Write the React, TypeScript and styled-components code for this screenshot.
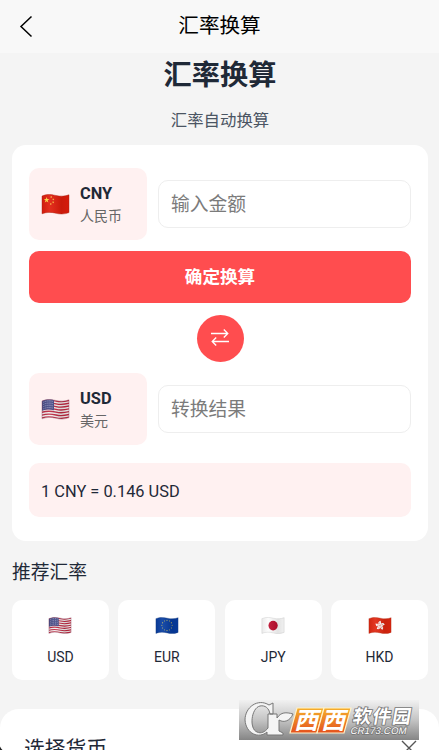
import React from "react";
import styled, { createGlobalStyle } from "styled-components";

const Global = createGlobalStyle`
  * { box-sizing: border-box; }
  html, body { margin: 0; height: 750px; overflow: hidden; }
  body { background: #f4f4f4; color: #1f2937; font-family: Roboto, "Noto Sans CJK SC", sans-serif; }
  button, input { font-family: inherit; }
`;

const Page = styled.div`
  position: relative;
  width: 439px;
  height: 750px;
  overflow: hidden;
  display: flex;
  flex-direction: column;
`;
const NavBar = styled.header`
  flex: none;
  height: 53px;
  background: #f8f8f8;
  display: grid;
  grid-template-columns: 60px 1fr 60px;
  align-items: center;
  padding-bottom: 1px;
`;
const BackButton = styled.button`
  border: 0;
  background: none;
  padding: 1px 0 0 18px;
  display: flex;
`;
const NavTitle = styled.div`
  text-align: center;
  font-size: 20.6px;
  line-height: 30px;
  color: #000;
`;
const Content = styled.main`
  flex: none;
  padding: 0 11px 0 12px;
  display: flex;
  flex-direction: column;
`;
const Heading = styled.h1`
  margin: 0;
  height: 42px;
  line-height: 45px;
  font-size: 28.2px;
  font-weight: 700;
  text-align: center;
`;
const Subtitle = styled.p`
  margin: 12px 0 14px;
  height: 24px;
  line-height: 27px;
  font-size: 16.4px;
  text-align: center;
  color: #4b5563;
`;
const Card = styled.section`
  height: 396px;
  padding: 23px 17px;
  background: #fff;
  border-radius: 14px;
  display: flex;
  flex-direction: column;
`;
const Row = styled.div`
  height: 72px;
  display: flex;
  align-items: center;
  gap: 11px;
`;
const CurrencyBox = styled.div`
  width: 118px;
  height: 72px;
  padding-left: 12px;
  border-radius: 10px;
  background: #fff1f1;
  display: flex;
  align-items: center;
  gap: 10px;
`;
const Labels = styled.div`
  padding-top: 2px;
`;
const Code = styled.div`
  font-size: 16.4px;
  font-weight: 700;
  line-height: 23px;
`;
const Name = styled.div`
  font-size: 14px;
  line-height: 23px;
  color: #666;
`;
const Amount = styled.input`
  flex: 1;
  min-width: 0;
  height: 48px;
  padding: 1px 12px 0;
  border: 1px solid #eee;
  border-radius: 10px;
  font-size: 18.8px;
  background: #fff;
  &::placeholder { color: #7b7b7b; opacity: 1; }
`;
const Convert = styled.button`
  flex: none;
  height: 52px;
  margin: 11px 0 12px;
  padding: 0 0 3px;
  border: 0;
  border-radius: 10px;
  background: #ff4d4f;
  color: #fff;
  font-size: 17.6px;
  font-weight: 700;
`;
const Swap = styled.button`
  flex: none;
  align-self: center;
  width: 47px;
  height: 47px;
  margin-bottom: 11px;
  padding: 0 0 2px;
  border: 0;
  border-radius: 50%;
  background: #ff4d4f;
  display: flex;
  align-items: center;
  justify-content: center;
`;
const Rate = styled.div`
  height: 54px;
  margin-top: 18px;
  padding: 0 12px;
  line-height: 57px;
  border-radius: 10px;
  background: #fff1f1;
  font-size: 16.4px;
`;
const SectionTitle = styled.h2`
  margin: 17px 0 15px;
  height: 27px;
  line-height: 31px;
  font-size: 18.8px;
  font-weight: 400;
`;
const Tiles = styled.div`
  display: grid;
  grid-template-columns: repeat(4, 1fr);
  gap: 9.4px;
`;
const Tile = styled.div`
  height: 80px;
  padding-top: 17px;
  border-radius: 10px;
  background: #fff;
  display: flex;
  flex-direction: column;
  align-items: center;
  gap: 11px;
  font-size: 14px;
  line-height: 24px;
`;
const Sheet = styled.section`
  flex: none;
  height: 70px;
  margin-top: 29px;
  padding: 25px 22px 0 24px;
  border-radius: 19px 19px 0 0;
  background: #fff;
  display: flex;
  justify-content: space-between;
`;
const SheetTitle = styled.div`
  font-size: 20.8px;
  line-height: 30px;
`;
const CloseIcon = styled.svg`
  margin-top: 6px;
`;
const Watermark = styled.svg`
  position: absolute;
  left: 239px;
  top: 700px;
`;
const ScreenCorner = styled.svg`
  position: absolute;
  left: 0;
  bottom: 0;
`;

const wave = "M1 2 C7 -.5 11 .7 15 1.5 C20 2.6 24 2.2 28 .8 V18.6 C23 20.5 19 20.3 15 19.3 C10 18 6 18 1 19.8Z";
const star = "M0 -1 L.23 -.31 H.95 L.36 .12 L.59 .81 L0 .38 L-.59 .81 L-.36 .12 L-.95 -.31 H-.23Z";

type Country = "CNY" | "USD" | "EUR" | "JPY" | "HKD";

const emblem: Record<Country, React.ReactNode> = {
  CNY: (
    <g fill="#ffd943">
      <path d={star} transform="translate(5.6 6) scale(3)" />
      {[[10.3, 3], [12.3, 5.4], [12.2, 8.3], [9.8, 10]].map(([x, y]) => (
        <path key={y} d={star} transform={`translate(${x} ${y}) rotate(20) scale(1.15)`} />
      ))}
    </g>
  ),
  USD: (
    <>
      {[0, 1, 2, 3, 4, 5, 6].map((i) => (
        <path key={i} d={`M0 ${2.4 + i * 2.8} C7 ${i * 2.8} 11 ${1 + i * 2.8} 15 ${2 + i * 2.8} S24 ${2.6 + i * 2.8} 29 ${1.2 + i * 2.8}`} stroke="#bd2941" strokeWidth="1.35" fill="none" />
      ))}
      <path d="M0 0H13V11.2C8 10 5 10.4 0 12Z" fill="#454985" />
      {[0, 1, 2, 3].map((r) => (
        <path key={r} d={`M2.5 ${3.2 + r * 2.2} Q7 ${1 + r * 2.2} 12 ${2.5 + r * 2.2}`} stroke="#d8d9ee" strokeWidth=".8" strokeDasharray=".8 1.3" fill="none" />
      ))}
    </>
  ),
  EUR: (
    <g fill="#dfcc55">
      {Array.from({ length: 12 }, (_, i) => (
        <path key={i} d={star} transform={`translate(${14.5 + 6.2 * Math.sin((i * Math.PI) / 6)} ${10.2 - 6.2 * Math.cos((i * Math.PI) / 6)})`} />
      ))}
    </g>
  ),
  JPY: <ellipse cx="14.6" cy="10.4" rx="5.6" ry="5.8" fill="#bd0c2d" />,
  HKD: (
    <g fill="#fff" transform="translate(14.5 10.3)">
      {[0, 72, 144, 216, 288].map((a) => (
        <g key={a} transform={`rotate(${a})`}>
          <path d="M0 -.3 C-3 -2 -2.4 -5.4 1.1 -5.8 C.2 -4.4 2.8 -3 0 -.3Z" />
          <path d="M0 -1.5 Q-.9 -2.7 -.2 -3.8" stroke="#e13a1c" strokeWidth=".5" fill="none" />
        </g>
      ))}
    </g>
  ),
};
const ground: Record<Country, string> = { CNY: "#e01c0b", USD: "#f2eeee", EUR: "#063ca0", JPY: "#fcfcfc", HKD: "#e0260f" };
const edge: Record<Country, string> = { CNY: "#a62514", USD: "#91546a", EUR: "#173b76", JPY: "#bdbdbd", HKD: "#ad321b" };

function Flag({ code, size }: { code: Country; size: number }) {
  const id = `${code}-${size}`;
  return (
    <svg width={size} height={(size * 21) / 29} viewBox="0 0 29 21" aria-hidden>
      <defs>
        <clipPath id={`clip-${id}`}><path d={wave} /></clipPath>
        <linearGradient id={`shade-${id}`}>
          <stop offset="0" stopColor="#000" stopOpacity=".08" />
          <stop offset=".3" stopColor="#fff" stopOpacity=".08" />
          <stop offset=".7" stopColor="#000" stopOpacity=".1" />
          <stop offset="1" stopColor="#000" stopOpacity=".04" />
        </linearGradient>
      </defs>
      <g clipPath={`url(#clip-${id})`}>
        <rect width="29" height="21" fill={ground[code]} />
        {emblem[code]}
        <rect width="29" height="21" fill={`url(#shade-${id})`} />
      </g>
      <path d={wave} fill="none" stroke={edge[code]} strokeOpacity=".7" strokeWidth=".6" />
    </svg>
  );
}

function CurrencyRow({ code, name, hint }: { code: Country; name: string; hint: string }) {
  return (
    <Row>
      <CurrencyBox>
        <Flag code={code} size={29} />
        <Labels><Code>{code}</Code><Name>{name}</Name></Labels>
      </CurrencyBox>
      <Amount placeholder={hint} />
    </Row>
  );
}

const tiles: Country[] = ["USD", "EUR", "JPY", "HKD"];

export default function App() {
  return (
    <Page>
      <Global />
      <NavBar>
        <BackButton aria-label="返回">
          <svg width="16" height="23" viewBox="0 0 16 23" fill="none" stroke="#000" strokeWidth="1.5"><path d="M13.5 1.5 3 11.5l10.5 10" /></svg>
        </BackButton>
        <NavTitle>汇率换算</NavTitle>
      </NavBar>
      <Content>
        <Heading>汇率换算</Heading>
        <Subtitle>汇率自动换算</Subtitle>
        <Card>
          <CurrencyRow code="CNY" name="人民币" hint="输入金额" />
          <Convert>确定换算</Convert>
          <Swap aria-label="互换">
            <svg width="20" height="20" viewBox="0 0 20 20" fill="none" stroke="#fff" strokeWidth="1.3"><path d="M1 5.5h17M13.8 1.5l4 4-4 4M19 13.5H2M6.2 9.5l-4 4 4 4" /></svg>
          </Swap>
          <CurrencyRow code="USD" name="美元" hint="转换结果" />
          <Rate>1 CNY = 0.146 USD</Rate>
        </Card>
        <SectionTitle>推荐汇率</SectionTitle>
        <Tiles>
          {tiles.map((code) => <Tile key={code}><Flag code={code} size={24} /><span>{code}</span></Tile>)}
        </Tiles>
      </Content>
      <Sheet>
        <SheetTitle>选择货币</SheetTitle>
        <CloseIcon width="16" height="16" viewBox="0 0 16 16" stroke="#555" strokeWidth="1.4"><path d="m1 1 14 14M15 1 1 15" /></CloseIcon>
      </Sheet>
      <Watermark width="180" height="40" viewBox="0 0 180 40">
        <defs>
          <linearGradient id="plate" x2="0" y2="1"><stop stopColor="#f1f1f1" /><stop offset=".5" stopColor="#c4c4c4" /><stop offset="1" stopColor="#858585" /></linearGradient>
          <linearGradient id="orange" x2="0" y2="1"><stop stopColor="#f5b02c" /><stop offset="1" stopColor="#e4501d" /></linearGradient>
        </defs>
        <rect width="180" height="40" fill="url(#plate)" />
        <path
          d="M34 3v11h-3C30 8 26 5 21 6 12 8 10 29 18 32c4 2 8 0 11-4V14h9v4c4-6 9-6 16-4-3 7-9 9-14 6v11l4 2v2H28v-3C20 39 7 34 6 20 6 7 19-2 30 5Z"
          fill="#f4f4f4" stroke="#777" strokeLinejoin="round"
        />
        {[0, 27].map((x) => (
          <path key={x} transform={`translate(${51 + x} 8)`} d="M7 0H34L27 25H0Z" fill="url(#orange)" stroke="#fff2c8" strokeWidth="1.2" />
        ))}
        <g fontFamily="'Noto Sans CJK SC', sans-serif" fontWeight="700" fill="#fff">
          <text transform="translate(55 29) skewX(-14)" fontSize="24" textLength="51">西西</text>
          <text transform="translate(113 23) skewX(-10)" fontSize="18.5" stroke="#777" strokeWidth="1.8" paintOrder="stroke" textLength="58">软件园</text>
          <text transform="translate(111 34) skewX(-12)" fontSize="9.6" fontWeight="400" fontFamily="'Liberation Sans', sans-serif" stroke="#777" strokeWidth="1.6" paintOrder="stroke" textLength="56">CR173.COM</text>
        </g>
      </Watermark>
      <ScreenCorner width="3" height="4" viewBox="0 0 3 4"><path d="M0 .5Q1 2.5 2.5 4H0Z" fill="#222" /></ScreenCorner>
    </Page>
  );
}
